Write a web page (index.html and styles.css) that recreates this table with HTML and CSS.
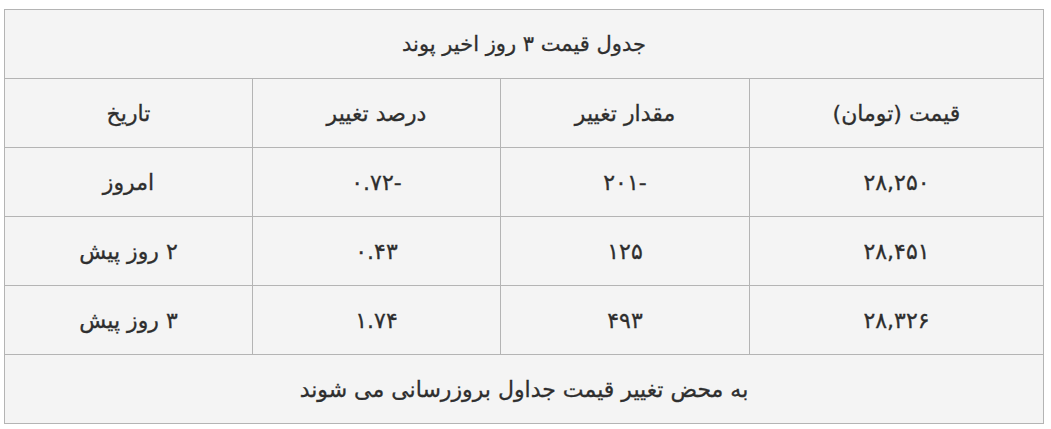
FILE: index.html
```html
<!DOCTYPE html>
<html lang="fa" dir="rtl">
<head>
<meta charset="utf-8">
<title>جدول قیمت پوند</title>
<link rel="stylesheet" href="styles.css">
</head>
<body>
<div class="wrap">
<table class="price-table">
<colgroup>
<col class="c1"><col class="c2"><col class="c3"><col class="c4">
</colgroup>
<tbody>
<tr><td colspan="4" class="title">جدول قیمت ۳ روز اخیر پوند</td></tr>
<tr><td>قیمت (تومان)</td><td>مقدار تغییر</td><td>درصد تغییر</td><td>تاریخ</td></tr>
<tr><td>۲۸,۲۵۰</td><td>-۲۰۱</td><td>-۰.۷۲</td><td>امروز</td></tr>
<tr><td>۲۸,۴۵۱</td><td>۱۲۵</td><td>۰.۴۳</td><td>۲ روز پیش</td></tr>
<tr><td>۲۸,۳۲۶</td><td>۴۹۳</td><td>۱.۷۴</td><td>۳ روز پیش</td></tr>
<tr><td colspan="4">به محض تغییر قیمت جداول بروزرسانی می شوند</td></tr>
</tbody>
</table>
</div>
</body>
</html>
```
FILE: styles.css
```css
html, body {
  margin: 0;
  padding: 0;
  background: #ffffff;
}
.wrap {
  padding: 9px 7px 0 5px;
}
.price-table {
  width: 1039px;
  border-collapse: collapse;
  table-layout: fixed;
  font-family: "DejaVu Sans", sans-serif;
  font-size: 22px;
  color: #2e2e2e;
  background: #f4f4f4;
}
.price-table .c1 { width: 294px; }
.price-table .c2 { width: 249px; }
.price-table .c3 { width: 248px; }
.price-table .c4 { width: 248px; }
.price-table td {
  border: 1px solid #b4b4b4;
  height: 68px;
  padding: 0;
  text-align: center;
  vertical-align: middle;
  -webkit-text-stroke: 0.3px #2e2e2e;
}
.price-table .title {
  font-size: 21px;
}
```
